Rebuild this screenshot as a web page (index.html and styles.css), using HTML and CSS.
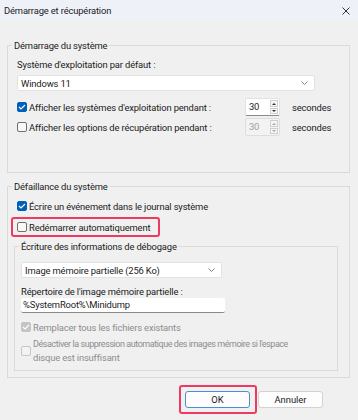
FILE: index.html
```html
<!DOCTYPE html>
<html>
<head>
    <title>Démarrage et récupération</title>
    <link rel="stylesheet" href="styles.css">
</head>
<body>
    <div class="window">
        <div class="titlebar">
            <span class="title">Démarrage et récupération</span>
            <svg class="close" width="8" height="8" viewBox="0 0 8 8"><path d="M0.5 0.5 L7.5 7.5 M7.5 0.5 L0.5 7.5" stroke="#333" stroke-width="1" fill="none"/></svg>
        </div>

        <div class="content">
            <fieldset class="group">
                <legend>Démarrage du système</legend>
                <div class="group-body startup">
                    <div class="label">Système d'exploitation par défaut :</div>
                    <div class="select os-select">
                        <span>Windows 11</span>
                        <svg width="7" height="4" viewBox="0 0 7 4"><path d="M0.5 0.5 L3.5 3.5 L6.5 0.5" stroke="#777" stroke-width="0.9" fill="none"/></svg>
                    </div>
                    <div class="timer-row">
                        <div class="check"><span class="box checked"><svg width="8" height="6" viewBox="0 0 8 6"><path d="M1 3 L3 5 L7 1" stroke="#fff" stroke-width="1.1" fill="none"/></svg></span>Afficher les systèmes d'exploitation pendant :</div>
                        <div class="spin">
                            <span class="spin-value">30</span>
                            <div class="spin-buttons">
                                <span class="spin-btn up"></span>
                                <span class="spin-btn down"></span>
                            </div>
                        </div>
                        <span class="unit">secondes</span>
                    </div>
                    <div class="timer-row">
                        <div class="check"><span class="box"></span>Afficher les options de récupération pendant :</div>
                        <div class="spin disabled">
                            <span class="spin-value">30</span>
                            <div class="spin-buttons">
                                <span class="spin-btn up"></span>
                                <span class="spin-btn down"></span>
                            </div>
                        </div>
                        <span class="unit">secondes</span>
                    </div>
                </div>
            </fieldset>

            <fieldset class="group failure">
                <legend>Défaillance du système</legend>
                <div class="group-body failure-body">
                    <div class="check"><span class="box checked"><svg width="8" height="6" viewBox="0 0 8 6"><path d="M1 3 L3 5 L7 1" stroke="#fff" stroke-width="1.1" fill="none"/></svg></span>Écrire un événement dans le journal système</div>
                    <div class="highlight">
                        <div class="check"><span class="box"></span>Redémarrer automatiquement</div>
                    </div>

                    <fieldset class="group debug">
                        <legend>Écriture des informations de débogage</legend>
                        <div class="group-body debug-body">
                            <div class="select dump-select">
                                <span>Image mémoire partielle (256 Ko)</span>
                                <svg width="7" height="4" viewBox="0 0 7 4"><path d="M0.5 0.5 L3.5 3.5 L6.5 0.5" stroke="#777" stroke-width="0.9" fill="none"/></svg>
                            </div>
                            <div class="label dir-label">Répertoire de l'image mémoire partielle :</div>
                            <div class="textbox">%SystemRoot%\Minidump</div>
                            <div class="check disabled overwrite"><span class="box checked"><svg width="8" height="6" viewBox="0 0 8 6"><path d="M1 3 L3 5 L7 1" stroke="#fff" stroke-width="1.1" fill="none"/></svg></span>Remplacer tous les fichiers existants</div>
                            <div class="check disabled multiline"><span class="box"></span><span><span class="tight">Désactiver la suppression automatique des images mémoire si l'espace</span><br>disque est insuffisant</span></div>
                        </div>
                    </fieldset>
                </div>
            </fieldset>

            <div class="buttons">
                <div class="highlight ok-ring"><button class="primary">OK</button></div>
                <button>Annuler</button>
            </div>
        </div>
    </div>
</body>
</html>
```

FILE: styles.css
```css
body {
    margin: 0;
    font-family: Roboto, 'Noto Sans', sans-serif;
    font-size: 9.4px;
    letter-spacing: -0.15px;
    line-height: 13px;
    color: #1b1b1b;
    background-color: #f0f0f0;
}
.window {
    width: 358px;
    height: 420px;
    background-color: #f0f0f0;
}
.titlebar {
    height: 21px;
    background-color: #eef2f8;
    display: flex;
    align-items: center;
    justify-content: space-between;
    padding: 0 8px 0 4px;
}
.close {
    display: block;
}
.content {
    padding: 18px 8px 0 7px;
}
.group {
    margin: 0;
    padding: 0;
    border: 1px solid #dadada;
    min-width: 0;
}
.group legend {
    margin-left: 4px;
    padding: 0 2px;
    line-height: 13px;
}
.group-body {
    padding: 6px 11px 36px 9px;
}
.label {
    line-height: 13px;
}
.select {
    height: 16px;
    box-sizing: border-box;
    background-color: #fff;
    border: 1px solid #e2e2e2;
    border-radius: 2px;
    display: flex;
    align-items: center;
    justify-content: space-between;
    padding: 0 6px 0 3px;
}
.select svg {
    display: block;
}
.os-select {
    width: 298px;
    margin-top: 4px;
}
.timer-row {
    display: flex;
    align-items: center;
    height: 18px;
    margin-top: 2px;
}
.os-select + .timer-row {
    margin-top: 7px;
}
.timer-row .check {
    width: 228px;
}
.check {
    display: flex;
    align-items: center;
    height: 14px;
    white-space: nowrap;
}
.box {
    width: 10px;
    height: 10px;
    box-sizing: border-box;
    border: 1px solid #6f6f6f;
    border-radius: 2px;
    background-color: #f8f8f8;
    margin-right: 2px;
    display: flex;
    align-items: center;
    justify-content: center;
    flex-shrink: 0;
}
.box.checked {
    background-color: #005fb8;
    border-color: #005fb8;
}
.box svg {
    display: block;
}
.spin {
    width: 35px;
    height: 18px;
    box-sizing: border-box;
    display: flex;
    background-color: #fff;
    border: 1px solid #e2e2e2;
    border-bottom-color: #8a8a8a;
    border-radius: 2px;
}
.spin-value {
    flex: 1;
    padding-left: 3px;
    line-height: 16px;
}
.spin-buttons {
    width: 8px;
    display: flex;
    flex-direction: column;
    gap: 1px;
    padding: 1px 0;
    margin-right: 1px;
}
.spin-btn {
    flex: 1;
    border: 1px solid #cfcfcf;
    background-color: #f6f6f6;
    position: relative;
}
.spin-btn::after {
    content: '';
    position: absolute;
    left: 1px;
    top: 2px;
    border-left: 2px solid transparent;
    border-right: 2px solid transparent;
}
.spin-btn.up::after {
    border-bottom: 2px solid #333;
}
.spin-btn.down::after {
    top: 1px;
    border-top: 2px solid #333;
}
.spin.disabled {
    background-color: #f3f3f3;
    border-color: #dedede;
    color: #a0a0a0;
}
.spin.disabled .spin-btn::after {
    border-bottom-color: #a8a8a8;
    border-top-color: #a8a8a8;
}
.unit {
    margin-left: 12px;
}
.failure {
    margin-top: 7px;
}
.failure-body {
    padding: 6px 11px 6px 9px;
}
.highlight {
    border: 2px solid #ee3a62;
    border-radius: 3px;
    width: fit-content;
    margin: 4px 0 0 -6px;
    padding: 1px 8px 1px 4px;
}
.debug {
    margin: 3px 0 0 -3px;
}
.debug-body {
    padding: 9px 6px 6px 6px;
}
.dump-select {
    width: 201px;
}
.dir-label {
    margin-top: 7px;
}
.textbox {
    width: 204px;
    height: 15px;
    box-sizing: border-box;
    background-color: #fff;
    border-bottom: 1px solid #8a8a8a;
    border-radius: 2px;
    padding-left: 2px;
    line-height: 14px;
}
.check.disabled {
    color: #8d8d8d;
}
.check.disabled .box {
    border-color: #c6c6c6;
    background-color: #f3f3f3;
}
.check.disabled .box.checked {
    background-color: #c4c4c4;
    border-color: #c4c4c4;
}
.overwrite {
    margin-top: 7px;
}
.multiline {
    height: auto;
    margin-top: 3px;
}
.tight {
    font-size: 9px;
    letter-spacing: -0.45px;
}
.buttons {
    display: flex;
    justify-content: flex-end;
    align-items: center;
    gap: 1px;
    margin-top: 7px;
    padding-right: 27px;
}
.ok-ring {
    margin: 0;
    padding: 4px 5px 4px 4px;
}
button {
    font-family: inherit;
    font-size: 9.4px;
    width: 65px;
    height: 17px;
    box-sizing: border-box;
    background-color: #fdfdfd;
    border: 1px solid #d2d2d2;
    border-radius: 3px;
    color: #1b1b1b;
    padding: 0;
    display: block;
}
button.primary {
    border-color: #4a8fd4;
}
```
